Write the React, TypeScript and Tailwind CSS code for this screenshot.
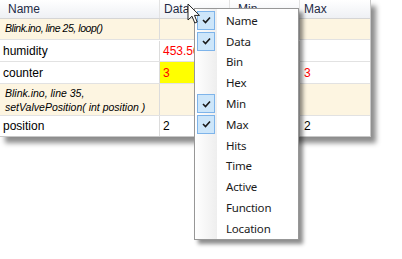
import React from "react";

const gridFont = { fontFamily: '"Liberation Sans", Arial, sans-serif' };
const menuFont = { fontFamily: '"Noto Sans", "Open Sans", sans-serif' };

function Check() {
  return (
    <svg width="9" height="8" viewBox="0 0 9 8">
      <path d="M1 4 L3.5 6.5 L8 1.5" fill="none" stroke="#1a1a1a" strokeWidth="1.6" />
    </svg>
  );
}

const items: [string, boolean][] = [
  ["Name", true],
  ["Data", true],
  ["Bin", false],
  ["Hex", false],
  ["Min", true],
  ["Max", true],
  ["Hits", false],
  ["Time", false],
  ["Active", false],
  ["Function", false],
  ["Location", false],
];

function Cell({ children, className = "" }: { children?: React.ReactNode; className?: string }) {
  return (
    <div className={`flex items-center border-r border-[#dcdcdc] ${className}`}>{children}</div>
  );
}

export default function App() {
  return (
    <div className="relative w-[402px] h-[259px] bg-white overflow-hidden" style={gridFont}>
      <div className="w-[371px] border-r border-b border-[#c8c8c8] shadow-[5px_6px_5px_rgba(0,0,0,0.45)] bg-white text-[12px] text-black">
        {/* header */}
        <div className="grid grid-cols-[160px_70px_70px_70px] h-[19px] bg-gradient-to-b from-white to-[#eef0f4] border-b border-[#d5d5d5] text-[#1e2a45]">
          <Cell className="pl-[8px] border-[#e3e3e3]">Name</Cell>
          <Cell className="pl-[4px] border-[#e3e3e3]">Data</Cell>
          <Cell className="pl-[8px] border-[#e3e3e3]">Min</Cell>
          <div className="flex items-center pl-[4px]">Max</div>
        </div>
        {/* location row 1 */}
        <div className="grid grid-cols-[160px_70px_70px_70px] h-[21px] bg-[#fdf5e1] border-b border-[#e2e2e2] text-[10.5px] italic">
          <Cell className="pl-[5px] tracking-[-0.45px]">Blink.ino, line 25, loop()</Cell>
          <Cell />
          <Cell />
          <div />
        </div>
        {/* humidity */}
        <div className="grid grid-cols-[160px_70px_70px_70px] h-[22px] border-b border-[#e2e2e2] pt-[1px]">
          <Cell className="pl-[3px]">humidity</Cell>
          <Cell className="pl-[3px] text-[#ff0000]">453.50</Cell>
          <Cell />
          <div />
        </div>
        {/* counter */}
        <div className="grid grid-cols-[160px_70px_70px_70px] h-[22px] border-b border-[#e2e2e2]">
          <Cell className="pl-[3px]">counter</Cell>
          <Cell className="pl-[3px] text-[#ff0000] bg-[#ffff00]">3</Cell>
          <Cell />
          <div className="flex items-center pl-[4px] text-[#ff0000]">3</div>
        </div>
        {/* location row 2 */}
        <div className="grid grid-cols-[160px_70px_70px_70px] h-[32px] bg-[#fdf5e1] border-b border-[#e2e2e2] text-[10.5px] italic">
          <Cell className="pl-[5px] leading-[14px]">
            <div>
              Blink.ino, line 35,
              <br />
              setValvePosition( int position )
            </div>
          </Cell>
          <Cell />
          <Cell />
          <div />
        </div>
        {/* position */}
        <div className="grid grid-cols-[160px_70px_70px_70px] h-[20px]">
          <Cell className="pl-[3px]">position</Cell>
          <Cell className="pl-[3px]">2</Cell>
          <Cell />
          <div className="flex items-center pl-[4px]">2</div>
        </div>
      </div>

      {/* context menu */}
      <div
        className="absolute left-[194px] top-[8px] w-[105px] pt-[1px] border border-[#979797] bg-white shadow-[4px_4px_4px_rgba(0,0,0,0.45)] text-[11.5px] text-[#1b1b1b]"
        style={menuFont}
      >
        <div className="absolute left-0 top-0 bottom-0 w-[22px] bg-gradient-to-r from-white to-[#eeeeee]" />
        {items.map(([label, checked]) => (
          <div key={label} className="relative flex items-center h-[20.8px]">
            <div className="w-[31px] pl-[2px] flex items-center">
              {checked ? (
                <div className="w-[18px] h-[19px] border border-[#7eb4ea] bg-[#cde6fa] flex items-center justify-center">
                  <Check />
                </div>
              ) : null}
            </div>
            <span className="tracking-[-0.2px]">{label}</span>
          </div>
        ))}
      </div>

      {/* mouse cursor */}
      <svg className="absolute left-[187px] top-[3px]" width="14" height="22" viewBox="0 0 14 22">
        <path
          d="M1 1 L1 17 L5 13.2 L7.8 20 L10.2 19 L7.5 12.4 L12.5 12.4 Z"
          fill="white"
          stroke="#222"
          strokeWidth="1"
          strokeLinejoin="miter"
        />
      </svg>
    </div>
  );
}
